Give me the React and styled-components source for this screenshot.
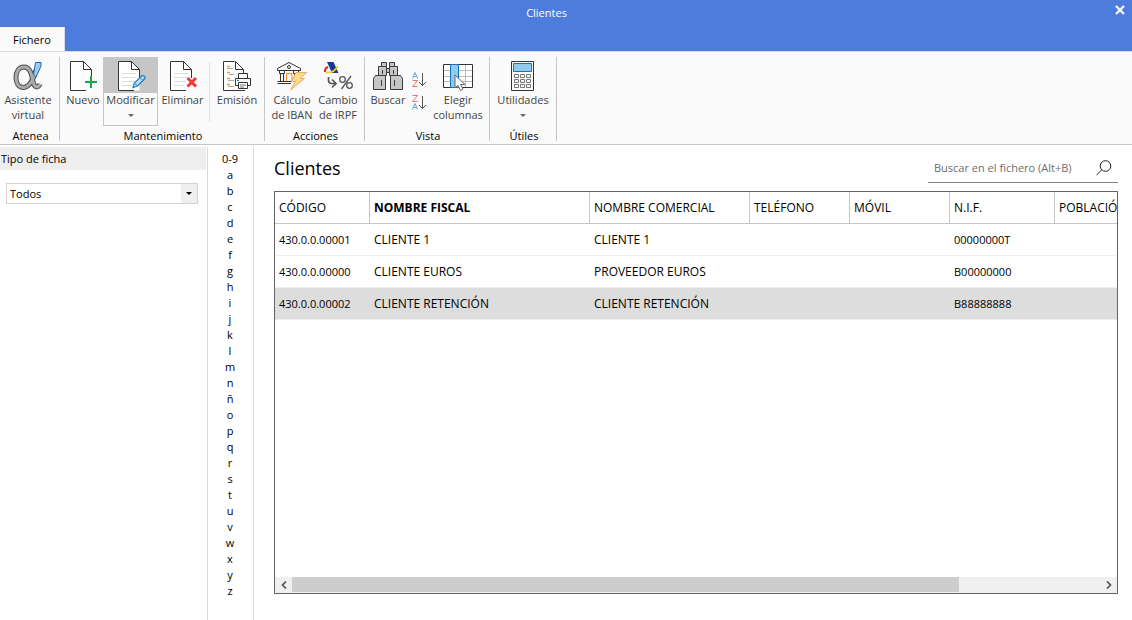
import styled, { createGlobalStyle } from 'styled-components';

const GlobalStyle = createGlobalStyle`
  * {
    box-sizing: border-box;
  }
  body {
    margin: 0;
    background: #ffffff;
    color: #000000;
    font-family: 'Open Sans', 'Noto Sans', sans-serif;
    font-size: 11px;
  }
  button, input, select {
    font: inherit;
    color: inherit;
    margin: 0;
    padding: 0;
    border: 0;
    background: none;
  }
  svg {
    display: block;
  }
`;

const Page = styled.div`
  display: flex;
  flex-direction: column;
  min-height: 100vh;
`;

const TitleBar = styled.header`
  display: flex;
  height: 27px;
  background: #4e7cdc;
  color: #ffffff;
`;
const WindowTitle = styled.div`
  flex: 1;
  padding-left: 2px;
  text-align: center;
  font-size: 11px;
  line-height: 26px;
`;
const CloseButton = styled.button`
  display: flex;
  justify-content: flex-end;
  width: 41px;
  height: 27px;
  padding: 5px 7px 0 0;
`;

const TabBar = styled.nav`
  display: flex;
  height: 24px;
  background: #4e7cdc;
`;
const Tab = styled.button`
  width: 65px;
  background: #fafafa;
  border-right: 1px solid #d5dcec;
`;

const Ribbon = styled.section`
  display: flex;
  height: 94px;
  padding-top: 5px;
  background: #fafafa;
  border-top: 1px solid #d5dcec;
  border-bottom: 1px solid #c6c6c6;
`;
const Group = styled.div`
  display: flex;
  flex-direction: column;
  width: ${({ $width }) => $width}px;
  height: 84px;
  border-right: 1px solid #c6c6c6;
`;
const GroupItems = styled.div`
  display: flex;
  padding-left: ${({ $indent }) => $indent}px;
  height: 71px;
`;
const GroupTitle = styled.div`
  padding-left: 2px;
  line-height: 20px;
  text-align: center;
`;
const Tool = styled.button`
  display: flex;
  flex-direction: column;
  align-items: center;
  width: ${({ $width }) => $width}px;
  height: 69px;
  border: 1px solid ${({ $active }) => ($active ? '#c6c6c6' : 'transparent')};
  background: ${({ $active }) =>
    $active ? 'linear-gradient(#c6c6c6 35px, transparent 35px)' : 'none'};
  color: #444444;
  line-height: 15px;
  white-space: nowrap;
`;
const ToolIcon = styled.span`
  height: 34px;
  padding-top: 3px;
`;
const Arrow = styled.span`
  margin-top: 7px;
  border: 3px solid transparent;
  border-top-color: #666666;
  border-bottom: 0;
`;
const ToolDivider = styled.span`
  width: 1px;
  height: 60px;
  margin: 5px 0 0 2px;
  background: #e2e2e2;
`;
const SortTools = styled.div`
  display: flex;
  flex-direction: column;
  gap: 6px;
  width: 20px;
  padding: 14px 0 0 2px;
`;

const Body = styled.div`
  flex: 1;
  display: flex;
  padding-top: 2px;
`;
const Sidebar = styled.aside`
  width: 208px;
  border-right: 1px solid #d9d9d9;
`;
const SideTitle = styled.label`
  display: block;
  width: 206px;
  padding-left: 1px;
  background: #eeeeee;
  line-height: 23px;
`;
const SelectBox = styled.div`
  position: relative;
  margin: 13px 9px 0 6px;
  height: 21px;
  border: 1px solid #d3d3d3;
`;
const Select = styled.select`
  display: block;
  appearance: none;
  width: 100%;
  height: 19px;
  padding-left: 3px;
  background: linear-gradient(#efefef, #efefef) right / 16px 100% no-repeat;
`;
const SelectArrow = styled.span`
  position: absolute;
  right: 5px;
  top: 8px;
  border: 3px solid transparent;
  border-top-color: #000000;
  border-bottom: 0;
  pointer-events: none;
`;

const Letters = styled.nav`
  display: flex;
  flex-direction: column;
  width: 46px;
  padding: 4px 1px 0 0;
  border-right: 1px solid #d9d9d9;
`;
const Letter = styled.button`
  height: 16px;
  line-height: 16px;
`;

const Main = styled.main`
  flex: 1;
  display: flex;
  flex-direction: column;
  min-width: 0;
  padding: 5px 14px 26px 20px;
`;
const MainHeader = styled.div`
  display: flex;
  justify-content: space-between;
  height: 39px;
`;
const Heading = styled.h1`
  margin: 0;
  font-size: 18px;
  font-weight: 400;
  line-height: 32px;
`;
const Search = styled.div`
  display: flex;
  align-items: center;
  width: 190px;
  height: 31px;
  padding: 0 6px;
  border-bottom: 1px solid #838383;
`;
const SearchInput = styled.input`
  flex: 1;
  min-width: 0;
  outline: none;
  &::placeholder {
    color: #6d6d6d;
    opacity: 1;
  }
`;

const Grid = styled.div`
  flex: 1;
  display: flex;
  flex-direction: column;
  border: 1px solid #646464;
`;
const GridView = styled.div`
  flex: 1;
  overflow: hidden;
`;
const Table = styled.table`
  width: 1010px;
  table-layout: fixed;
  border-collapse: separate;
  border-spacing: 0;
  font-size: 12px;
`;
const Th = styled.th`
  width: ${({ $width }) => $width}px;
  height: 32px;
  padding: 0 4px;
  border-right: 1px solid #c6c6c6;
  border-bottom: 1px solid #c6c6c6;
  font-weight: ${({ $sorted }) => ($sorted ? 700 : 400)};
  text-align: left;
  white-space: nowrap;
`;
const Tr = styled.tr`
  background: ${({ $selected }) => ($selected ? '#dddddd' : 'transparent')};
`;
const Td = styled.td`
  height: 32px;
  padding: 0 4px;
  border-bottom: 1px solid #eeeeee;
  font-size: ${({ $code }) => ($code ? 11 : 12)}px;
  white-space: nowrap;
`;

const ScrollBar = styled.div`
  display: flex;
  height: 16px;
  background: #f0f0f0;
`;
const ScrollButton = styled.button`
  display: flex;
  align-items: center;
  justify-content: center;
  width: 17px;
`;
const ScrollTrack = styled.div`
  flex: 1;
  display: grid;
  grid-template-columns: 33fr 7fr;
`;
const ScrollThumb = styled.div`
  height: 15px;
  background: #cdcdcd;
`;

function Sheet({ lines, children }) {
  return (
    <svg width="30" height="30" viewBox="0 0 30 30" fill="none">
      <path d="M2.500 .5H15.500L23.500 8.500V29.500H2.500Z" fill="#fff" />
      <path d="M23.500 17V8.500L15.500 .5H2.500V29.500H18" stroke="#333" />
      <path d="M15.500 .5V8.500H23.500" stroke="#333" />
      {lines && <path d="M6 12.500H20M6 16.500H20M6 20.500H18M6 24.500H16" stroke="#ddd" />}
      {children}
    </svg>
  );
}

const NewIcon = () => (
  <Sheet>
    <path d="M23 15V27M17 21H29" stroke="#16a750" strokeWidth="2" />
  </Sheet>
);
const EditIcon = () => (
  <Sheet lines>
    <path d="M17 26.500L18.300 22L26 14.600Q29 14.300 29 17.500L21.500 25Z" fill="#b9def5" stroke="#2381c4" strokeWidth="1.300" />
    <path d="M24 16.500L27 19.500M19 22.500L21 24.500" stroke="#2381c4" />
  </Sheet>
);
const DeleteIcon = () => (
  <Sheet lines>
    <path d="M19.500 17L28 25.500M28 17L19.500 25.500" stroke="#ee3a37" strokeWidth="3" />
  </Sheet>
);
const alpha =
  'M23.500 8C21 15 18 26.500 10.500 26.500C5.500 26.500 3 22 3 16.500C3 10.500 6 6 11 6C17 6 18.500 13 20 20.500C21 26 24.500 28 27 23';
const AssistantIcon = () => (
  <svg width="30" height="30" viewBox="0 0 30 30" fill="none">
    <path d={alpha} stroke="#505050" strokeWidth="5" />
    <path d={alpha} stroke="#aaa" strokeWidth="3" />
    <path d="M22.500 1.500H28V5L23 16L20.500 14Z" fill="#9acdf0" stroke="#1f68b0" />
  </svg>
);
const PrintIcon = () => (
  <svg width="30" height="30" viewBox="0 0 30 30" fill="none">
    <path d="M12.500 .5H1.500V29.500H23M21.500 13V8.500L13.500 .5V8.500H21.500" fill="#fff" stroke="#333" />
    <path d="M5 5.500H8M5 11.500H8M5 17.500H8M5 23.500H8" stroke="#f29a1f" strokeWidth="1.500" />
    <path d="M5 7.500H11M7 13.500H12M6 19.500H12M6 25.500H12" stroke="#aaa" />
    <path d="M16.500 17V12.500H25.500V17M16 24.500H13.500V17.500H28.500V24.500H26" fill="#fafafa" stroke="#333" />
    <path d="M16.500 21.500H25.500V27.500H16.500Z" fill="#fff" stroke="#333" />
    <path d="M18 24H24M18 26H22" stroke="#777" />
    <path d="M15 19.500H17" stroke="#1682cf" />
  </svg>
);
const BankIcon = () => (
  <svg width="30" height="30" viewBox="0 0 30 30" fill="none">
    <path d="M.5 7.500L12 1.500L23.500 7.500V9.500H.5Z" fill="#fafafa" stroke="#333" />
    <circle cx="12" cy="6" r="1.500" stroke="#333" />
    <path d="M2.500 10V12.500H7.500V10M16.500 10V12.500H21.500V10M3.500 12.500V20M6.500 12.500V20M17.500 12.500V14M20.500 12V13M.5 20.500H15M.5 22.500H14" stroke="#333" />
    <path d="M9.500 20V12.500H15V20" stroke="#ef8b25" />
    <path d="M19 11.500H29.500L23.500 17.500H27.500L13.500 29L18.500 20.500H14.500Z" fill="#fbdc8a" stroke="#ecaa6e" />
  </svg>
);
const TaxIcon = () => (
  <svg width="30" height="30" viewBox="0 0 30 30" fill="none">
    <path d="M4 1H10.500L15.500 12H9Z" fill="#143a94" />
    <path d="M5 6Q1.500 7.500 2 11" stroke="#e0242f" strokeWidth="2" />
    <path d="M3 11.500Q12 12 14.500 5" stroke="#f7cf20" strokeWidth="1.800" />
    <path d="M5.500 16V19Q5.500 22.500 9 22.500H12M9 18.500L13 22.500L9 26.500" stroke="#555" strokeWidth="1.700" />
    <circle cx="19.500" cy="18.500" r="2.800" stroke="#555" strokeWidth="1.300" />
    <circle cx="26.500" cy="24.500" r="2.800" stroke="#555" strokeWidth="1.300" />
    <path d="M28 15L18.500 28" stroke="#555" strokeWidth="1.300" />
  </svg>
);
const BinocularsIcon = () => (
  <svg width="30" height="30" viewBox="0 0 30 30" fill="#c6c6c6" stroke="#3c3c3c">
    <path d="M8.500 1.500H13.500V5.500H8.500ZM16.500 1.500H21.500V5.500H16.500ZM12.500 7.500H17.500V11.500H12.500Z" />
    <path d="M5.500 5.500H13.500V14.500H5.500ZM16.500 5.500H24.500V14.500H16.500ZM2.500 14.500H12.500V28.500H.5V17.500ZM17.500 14.500H27.500L29.500 17.500V28.500H17.500Z" />
    <path d="M9.500 9V13M20.500 9V13M8.500 19V25M21.500 19V25" />
  </svg>
);
const ColumnsIcon = () => (
  <svg width="30" height="30" viewBox="0 0 30 30" fill="none">
    <path d="M.5 3.500H29.500V26.500H.5Z" fill="#fff" />
    <path d="M1 9.500H29M1 15.500H29M1 20.500H29M22.500 4V26" stroke="#bbb" />
    <path d="M.5 3.500H29.500V26.500H.5Z" stroke="#333" />
    <path d="M7.500 3.500H15.500V26.500H7.500Z" fill="#91c9ef" stroke="#1c73b8" />
    <path d="M12 14V27L15 24.500L17.500 29.500L20 28L17.500 23.500H22Z" fill="#fff" stroke="#666" />
  </svg>
);
const CalculatorIcon = () => (
  <svg width="24" height="30" viewBox="0 0 24 30" fill="none">
    <path d="M.5 .5H22.500V29.500H.5Z" fill="#fafafa" stroke="#333" />
    <path d="M2.500 2.500H20.500V10.500H2.500Z" fill="#91c9ef" stroke="#1c73b8" />
    <path
      d="M3.500 13.500h4v3h-4zM9.500 13.500h4v3h-4zM15.500 13.500h4v3h-4zM3.500 18.500h4v3h-4zM9.500 18.500h4v3h-4zM15.500 18.500h4v3h-4zM3.500 23.500h4v3h-4zM9.500 23.500h4v3h-4zM15.500 23.500h4v3h-4z"
      stroke="#777"
    />
  </svg>
);
const A = 'M.5 6.500L3 .5L5.500 6.500M1.500 4.500H4.500';
const Z = 'M.5 .5H5.500L.5 6.500H5.500';
const SortIcon = ({ desc }) => (
  <svg width="15" height="17" viewBox="0 0 15 17" fill="none">
    <path d={desc ? Z : A} stroke={desc ? '#ea7474' : '#5fabdc'} transform="translate(0 1)" />
    <path d={desc ? A : Z} stroke={desc ? '#5fabdc' : '#ea7474'} transform="translate(0 9)" />
    <path d="M10.500 2V14.500M7 11L10.500 14.500L14 11" stroke="#555" />
  </svg>
);

const columns = [
  { name: 'CÓDIGO', width: 95, code: true },
  { name: 'NOMBRE FISCAL', width: 220, sorted: true },
  { name: 'NOMBRE COMERCIAL', width: 160 },
  { name: 'TELÉFONO', width: 100 },
  { name: 'MÓVIL', width: 100 },
  { name: 'N.I.F.', width: 105, code: true },
  { name: 'POBLACIÓN', width: 230 },
];
const clients = [
  ['430.0.0.00001', 'CLIENTE 1', 'CLIENTE 1', '', '', '00000000T', ''],
  ['430.0.0.00000', 'CLIENTE EUROS', 'PROVEEDOR EUROS', '', '', 'B00000000', ''],
  ['430.0.0.00002', 'CLIENTE RETENCIÓN', 'CLIENTE RETENCIÓN', '', '', 'B88888888', ''],
];
const letters = ['0-9', ...'abcdefghijklmnñopqrstuvwxyz'];

function RibbonTool({ icon, label, width, active, menu }) {
  return (
    <Tool $width={width} $active={active}>
      <ToolIcon>{icon}</ToolIcon>
      {label.map((line) => (
        <span key={line}>{line}</span>
      ))}
      {menu && <Arrow />}
    </Tool>
  );
}

function RibbonGroup({ title, width, indent, children }) {
  return (
    <Group $width={width}>
      <GroupItems $indent={indent}>{children}</GroupItems>
      <GroupTitle>{title}</GroupTitle>
    </Group>
  );
}

export default function App() {
  return (
    <Page>
      <GlobalStyle />
      <TitleBar>
        <WindowTitle>Clientes</WindowTitle>
        <CloseButton aria-label="Cerrar">
          <svg width="10" height="10" viewBox="0 0 10 10">
            <path d="M1 1L9 9M9 1L1 9" stroke="#fff" strokeWidth="2.200" />
          </svg>
        </CloseButton>
      </TitleBar>
      <TabBar>
        <Tab>Fichero</Tab>
      </TabBar>
      <Ribbon>
        <RibbonGroup title="Atenea" width={60} indent={0}>
          <RibbonTool icon={<AssistantIcon />} label={['Asistente', 'virtual']} width={56} />
        </RibbonGroup>
        <RibbonGroup title="Mantenimiento" width={205} indent={3}>
          <RibbonTool icon={<NewIcon />} label={['Nuevo']} width={40} />
          <RibbonTool icon={<EditIcon />} label={['Modificar']} width={55} active menu />
          <RibbonTool icon={<DeleteIcon />} label={['Eliminar']} width={49} />
          <ToolDivider />
          <RibbonTool icon={<PrintIcon />} label={['Emisión']} width={54} />
        </RibbonGroup>
        <RibbonGroup title="Acciones" width={100} indent={4}>
          <RibbonTool icon={<BankIcon />} label={['Cálculo', 'de IBAN']} width={46} />
          <RibbonTool icon={<TaxIcon />} label={['Cambio', 'de IRPF']} width={46} />
        </RibbonGroup>
        <RibbonGroup title="Vista" width={125} indent={1}>
          <RibbonTool icon={<BinocularsIcon />} label={['Buscar']} width={44} />
          <SortTools>
            <button aria-label="Orden ascendente">
              <SortIcon />
            </button>
            <button aria-label="Orden descendente">
              <SortIcon desc />
            </button>
          </SortTools>
          <RibbonTool icon={<ColumnsIcon />} label={['Elegir', 'columnas']} width={56} />
        </RibbonGroup>
        <RibbonGroup title="Útiles" width={67} indent={3}>
          <RibbonTool icon={<CalculatorIcon />} label={['Utilidades']} width={60} menu />
        </RibbonGroup>
      </Ribbon>
      <Body>
        <Sidebar>
          <SideTitle htmlFor="tipo">Tipo de ficha</SideTitle>
          <SelectBox>
            <Select id="tipo">
              <option>Todos</option>
            </Select>
            <SelectArrow />
          </SelectBox>
        </Sidebar>
        <Letters>
          {letters.map((letter) => (
            <Letter key={letter}>{letter}</Letter>
          ))}
        </Letters>
        <Main>
          <MainHeader>
            <Heading>Clientes</Heading>
            <Search>
              <SearchInput aria-label="Buscar en el fichero" placeholder="Buscar en el fichero (Alt+B)" />
              <svg width="16" height="18" viewBox="0 0 16 18" fill="none" stroke="#222">
                <circle cx="9.500" cy="8" r="5.300" />
                <path d="M5.800 11.800L.5 17" />
              </svg>
            </Search>
          </MainHeader>
          <Grid>
            <GridView>
              <Table>
                <thead>
                  <tr>
                    {columns.map((col) => (
                      <Th key={col.name} $width={col.width} $sorted={col.sorted}>
                        {col.name}
                      </Th>
                    ))}
                  </tr>
                </thead>
                <tbody>
                  {clients.map((client, i) => (
                    <Tr key={client[0]} $selected={i === 2}>
                      {client.map((value, j) => (
                        <Td key={columns[j].name} $code={columns[j].code}>
                          {value}
                        </Td>
                      ))}
                    </Tr>
                  ))}
                </tbody>
              </Table>
            </GridView>
            <ScrollBar>
              <ScrollButton aria-label="Izquierda">
                <svg width="6" height="8" viewBox="0 0 6 8" fill="none">
                  <path d="M5 .5L1.500 4L5 7.500" stroke="#555" strokeWidth="1.700" />
                </svg>
              </ScrollButton>
              <ScrollTrack>
                <ScrollThumb />
              </ScrollTrack>
              <ScrollButton aria-label="Derecha">
                <svg width="6" height="8" viewBox="0 0 6 8" fill="none">
                  <path d="M1 .5L4.500 4L1 7.500" stroke="#555" strokeWidth="1.700" />
                </svg>
              </ScrollButton>
            </ScrollBar>
          </Grid>
        </Main>
      </Body>
    </Page>
  );
}
